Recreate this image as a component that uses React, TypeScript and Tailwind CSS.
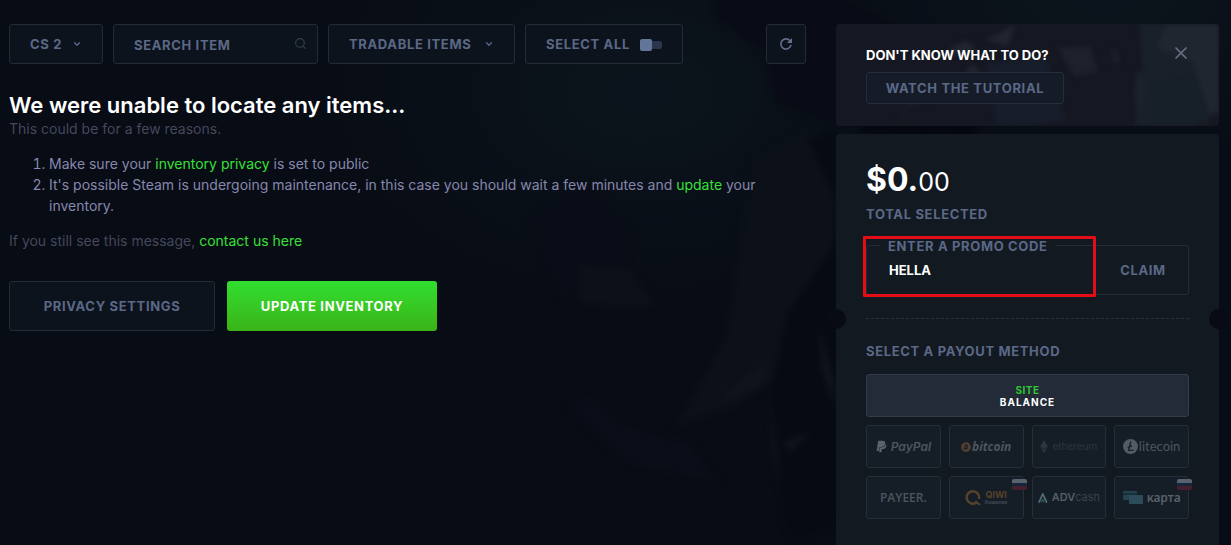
import { useState, type ReactNode } from 'react';
import { FaBitcoin, FaEthereum, FaPaypal } from 'react-icons/fa';
import { ChevronDown, Search, X } from 'lucide-react';

const LABEL = 'text-[13px] font-bold uppercase tracking-wider text-[#5b6886]';
const BOX = 'rounded-[3px] border border-[#222b38] bg-[#0c131d]';

const Backdrop = () => (
  <svg
    className="pointer-events-none absolute inset-0 h-full w-full"
    viewBox="0 0 1231 545"
    preserveAspectRatio="xMidYMid slice"
    aria-hidden="true"
  >
    <defs>
      <radialGradient id="glow" cx="0.5" cy="0.5" r="0.5">
        <stop offset="0" stopColor="#0b141c" />
        <stop offset="1" stopColor="#0b141c" stopOpacity="0" />
      </radialGradient>
      <filter id="soft" colorInterpolationFilters="sRGB"><feGaussianBlur stdDeviation="3" /></filter>
    </defs>
    <ellipse cx="640" cy="90" rx="330" ry="220" fill="url(#glow)" />
    <ellipse cx="1100" cy="0" rx="320" ry="160" fill="url(#glow)" />
    <g filter="url(#soft)">
      <path d="M716 0h134l60 30v96l-74-2-60-20-10-50-50-36z" fill="#090c16" />
      <path d="M752 160l60-34 24 60v120l-40 60-60 40-60 20 50-90z" fill="#0c1019" />
      <path d="M560 300l-30-80 60-40 44 60-10 30z" fill="#0a0d17" />
      <path d="M580 265l50 5 24 35-30 4-46-6z" fill="#0d1019" />
      <path d="M822 262l-34 50-14 60-4 60 20 110 46-20V240z" fill="#070a12" />
      <path d="M568 410l22-16 30 30 70 20 30 40-90-20z" fill="#0b0e18" />
      <path d="M728 392l36-30v24l-40 14z" fill="#0f131c" />
      <path d="M818 325l18 60v24l-14-40zM770 392l8 70 4 24-10-30zM784 442l26-10-20 20z" fill="#10141e" />
      <path d="M808 140l28 60v-70z" fill="#080a13" />
      <path d="M862 126h116v8H862z" fill="#04060d" />
    </g>
  </svg>
);

const BannerArt = () => (
  <svg
    className="pointer-events-none absolute inset-0 h-full w-full"
    viewBox="0 0 383 102"
    preserveAspectRatio="xMaxYMid slice"
    aria-hidden="true"
  >
    <defs>
      <filter id="haze" colorInterpolationFilters="sRGB"><feGaussianBlur stdDeviation="2" /></filter>
    </defs>
    <g filter="url(#haze)">
      <path d="M150 40l60-8 20 66-70 4z" fill="#171d2a" />
      <path d="M304 0h79v88l-26 14h-58l8-50z" fill="#1a202a" />
      <path d="M330 0h53v88h-10l-16-50-36-14z" fill="#1f262f" />
      <path d="M318 56l40-6 16 50h-56z" fill="#171f28" />
      <path d="M112 26l18-10 10 10-20 6zM150 16l30-16-8 22zM136 40l16 16-4 6-18-16z" fill="#20252f" />
      <path d="M222 24l32-2 8 26-24 4zM276 20l8 16-6 4zM302 44l10 16-10 40-4-30z" fill="#1c212b" />
      <path d="M60 100l16-26 50-6-50 12z" fill="#1b202a" />
    </g>
  </svg>
);

const RefreshIcon = () => (
  <svg viewBox="0 0 14 14" className="h-[14px] w-[14px]" fill="none" stroke="currentColor" aria-hidden="true">
    <path d="M10.8 3.6A5.1 5.1 0 1 0 12 7.8" strokeWidth="1.6" />
    <path d="M13 .9v5H8z" fill="currentColor" stroke="none" />
  </svg>
);

interface FilterSelectProps {
  label: string;
  option: string;
  width: string;
}

const FilterSelect = ({ label, option, width }: FilterSelectProps) => (
  <div className={`relative h-10 ${width} ${BOX}`}>
    <select
      aria-label={label}
      className={`h-full w-full cursor-pointer appearance-none bg-transparent pl-5 pt-px outline-none ${LABEL}`}
    >
      <option>{option}</option>
    </select>
    <ChevronDown className="pointer-events-none absolute right-5 top-[14px] h-[10px] w-[10px] text-[#5b6886]" strokeWidth={3} />
  </div>
);

const Flag = () => (
  <span className="absolute -right-1 top-[2px] flex w-[15px] flex-col" aria-hidden="true">
    <span className="h-1 rounded-t-[2px] bg-[#59626f]" />
    <span className="h-[3px] bg-[#18263d]" />
    <span className="h-1 rounded-b-[2px] bg-[#451f2d]" />
  </span>
);

const METHODS: { name: string; logo: ReactNode; flag?: boolean }[] = [
  {
    name: 'PayPal',
    logo: (
      <span className="flex items-center gap-1 text-[12px] font-semibold italic text-[#4d555f]">
        <FaPaypal className="h-[13px] w-[11px] text-[#5a626c]" />
        PayPal
      </span>
    ),
  },
  {
    name: 'Bitcoin',
    logo: (
      <span className="flex items-center gap-px font-['Open_Sans'] text-[12px] font-bold italic text-[#4d555f]">
        <FaBitcoin className="h-[10px] w-[10px] text-[#54402f]" />
        bitcoin
      </span>
    ),
  },
  {
    name: 'Ethereum',
    logo: (
      <span className="flex items-center gap-1 text-[10px] text-[#2d353f]">
        <FaEthereum className="h-[13px] w-2" />
        ethereum
      </span>
    ),
  },
  {
    name: 'Litecoin',
    logo: (
      <span className="flex items-center gap-px font-['Lato'] text-[13px] text-[#4d555f]">
        <svg viewBox="0 0 14 14" className="h-[15px] w-[15px]" aria-hidden="true">
          <circle cx="7" cy="7" r="7" fill="#525a64" />
          <path d="M7.2 2.5 5.4 10.6H10M4.4 8.1l4-1.8" fill="none" stroke="#19212b" strokeWidth="1.3" />
        </svg>
        litecoin
      </span>
    ),
  },
  {
    name: 'Payeer',
    logo: <span className="font-['Open_Sans'] text-[12px] font-semibold text-[#4d555f]">PAYEER.</span>,
  },
  {
    name: 'QIWI',
    flag: true,
    logo: (
      <span className="flex items-center gap-1 text-[#57432b]">
        <svg viewBox="0 0 16 16" className="h-4 w-4" fill="none" stroke="currentColor" aria-hidden="true">
          <path d="M12 12.1A6.2 6.2 0 1 1 13.9 9" strokeWidth="2.4" />
          <path d="M10.5 11q2 3 5 3.6" strokeWidth="1.8" />
        </svg>
        <span className="flex flex-col gap-px">
          <span className="text-[9px] font-bold leading-[8px]">QIWI</span>
          <span className="text-[5px] font-bold leading-[5px] text-[#424a54]">Кошелек</span>
        </span>
      </span>
    ),
  },
  {
    name: 'ADVcash',
    logo: (
      <span className="flex items-center gap-1 text-[11px] text-[#39424c]">
        <svg viewBox="0 0 10 10" className="h-[10px] w-[10px]" fill="none" aria-hidden="true">
          <path d="M.8 9.6 4.8 1l4 8.6" stroke="#4f7077" strokeWidth="1.7" />
          <path d="m3.2 9.4 1.6-3 1.6 3" stroke="#2f5b4f" strokeWidth="1.2" />
        </svg>
        <span><b className="font-semibold text-[#555d67]">ADV</b>cash</span>
      </span>
    ),
  },
  {
    name: 'Карта',
    flag: true,
    logo: (
      <span className="flex items-center gap-1 font-['Noto_Sans'] text-[12px] font-semibold text-[#59616b]">
        <svg viewBox="0 0 20 13" className="h-[13px] w-5" aria-hidden="true">
          <rect width="14" height="9" rx="1" fill="#26424f" />
          <rect y="2" width="14" height="2" fill="#18303c" />
          <rect x="6" y="4" width="14" height="9" rx="1" fill="#2c4c5a" />
        </svg>
        карта
      </span>
    ),
  },
];

const App = () => {
  const [promo, setPromo] = useState('HELLA');
  const [showTutorial, setShowTutorial] = useState(true);

  return (
    <div className="relative flex min-h-screen gap-[30px] overflow-hidden bg-[#080c15] pl-[9px] pr-3 pt-6 font-['Inter',sans-serif]">
      <Backdrop />

      <main className="relative min-w-0 flex-1">
        <div className="flex gap-[10px]">
          <FilterSelect label="Game" option="CS 2" width="w-[94px]" />
          <div className={`relative h-10 w-[205px] ${BOX}`}>
            <input
              type="search"
              aria-label="Search item"
              placeholder="SEARCH ITEM"
              className={`h-full w-full bg-transparent pl-5 pr-8 pt-px outline-none placeholder:text-[#5b6886] ${LABEL}`}
            />
            <Search className="pointer-events-none absolute right-[10px] top-3 h-[13px] w-[13px] text-[#333e50]" />
          </div>
          <FilterSelect label="Item filter" option="Tradable items" width="w-[187px]" />
          <label className={`flex h-10 w-[158px] cursor-pointer items-center gap-[10px] whitespace-nowrap pl-5 pt-px ${BOX} ${LABEL}`}>
            Select all
            <input
              type="checkbox"
              className="relative h-2 w-[22px] shrink-0 appearance-none rounded-[2px] bg-[#2a364c] before:absolute before:-top-[2px] before:left-0 before:h-3 before:w-3 before:rounded-[2px] before:bg-[#64759a]"
            />
          </label>
          <button aria-label="Refresh" className={`ml-auto flex h-10 w-10 items-center justify-center text-[#66708c] ${BOX}`}>
            <RefreshIcon />
          </button>
        </div>

        <h1 className="mt-7 text-[22px] font-semibold leading-[26px] text-white">We were unable to locate any items...</h1>
        <div className="text-[14px] leading-[21px] text-[#8787ad]">
          <p className="text-[#45475b]">This could be for a few reasons.</p>
          <ol className="mt-[14px] list-decimal pl-10">
            <li>
              Make sure your <a href="#privacy" className="text-[#38e038]">inventory privacy</a> is set to public
            </li>
            <li>
              It's possible Steam is undergoing maintenance, in this case you should wait a few minutes and{' '}
              <a href="#update" className="text-[#38e038]">update</a> your inventory.
            </li>
          </ol>
          <p className="mt-[14px] text-[#45475b]">
            If you still see this message, <a href="#contact" className="text-[#38e038]">contact us here</a>
          </p>
        </div>

        <div className="mt-[30px] flex gap-3">
          <button className={`h-[50px] w-[206px] pt-px ${BOX} ${LABEL}`}>Privacy settings</button>
          <button className="h-[50px] w-[210px] rounded-[3px] bg-linear-to-b from-[#30df30] to-[#3ab317] pt-px text-[13px] font-bold uppercase tracking-wider text-white">
            Update inventory
          </button>
        </div>
      </main>

      <aside className="relative flex w-[383px] shrink-0 flex-col gap-2">
        {showTutorial && (
          <section className="relative h-[102px] overflow-hidden rounded-[4px] bg-[#151822] px-[30px] pt-[21px]">
            <BannerArt />
            <div className="relative">
              <h2 className="text-[13px] font-bold uppercase leading-5 text-white">Don't know what to do?</h2>
              <button className={`mt-[7px] h-8 w-[198px] rounded-[3px] border border-[#232d3b] bg-[#151c28] pt-px ${LABEL}`}>
                Watch the tutorial
              </button>
            </div>
            <button
              aria-label="Close"
              onClick={() => setShowTutorial(false)}
              className="absolute right-7 top-[19px] text-[#6a7089]"
            >
              <X className="h-5 w-5" strokeWidth={2} />
            </button>
          </section>
        )}

        <section className="relative flex-1 rounded-t-[4px] bg-[#121921] px-[30px] pb-6 pt-[26px]">
          <p className="text-[32px] font-bold leading-10 text-white">
            $0.<span className="text-[25px] font-normal">00</span>
          </p>
          <p className={`mt-[2px] leading-5 ${LABEL}`}>Total selected</p>

          <div className="relative mt-[21px] flex h-[50px] rounded-[3px] border border-[#222b38]">
            <label htmlFor="promo" className={`absolute -top-[10px] left-[13px] bg-[#121921] px-2 leading-5 ${LABEL}`}>
              Enter a promo code
            </label>
            <input
              id="promo"
              value={promo}
              onChange={(e) => setPromo(e.target.value)}
              className="min-w-0 flex-1 bg-transparent pl-[22px] pt-px text-[13px] font-bold uppercase text-white outline-none"
            />
            <button className={`w-[90px] pt-px ${LABEL}`}>Claim</button>
            <span className="pointer-events-none absolute -left-1 -top-[10px] h-[61px] w-[233px] rounded-[1px] border-3 border-[#e20d16]" />
          </div>

          <div className="mt-[23px] border-t border-dashed border-[#28313e]" />
          <span className="absolute -left-[10px] top-[175px] h-5 w-5 rounded-full bg-[#080b14]" />
          <span className="absolute -right-[10px] top-[175px] h-5 w-5 rounded-full bg-[#080b14]" />

          <h2 className={`mt-[22px] leading-5 ${LABEL}`}>Select a payout method</h2>
          <button className="mt-[13px] flex h-[43px] w-full flex-col items-center justify-center rounded-[3px] border border-[#333d4a] bg-[#222b37] text-[10px] font-bold uppercase leading-3 tracking-widest text-white">
            <span className="tracking-wider text-[#2fc832]">Site</span>
            Balance
          </button>
          <div className="mt-2 grid grid-cols-4 gap-2">
            {METHODS.map((m) => (
              <button
                key={m.name}
                aria-label={m.name}
                className="relative flex h-[43px] items-center justify-center rounded-[3px] border border-[#242d38] bg-[#151d27]"
              >
                {m.logo}
                {m.flag && <Flag />}
              </button>
            ))}
          </div>
        </section>
      </aside>
    </div>
  );
};

export default App;
